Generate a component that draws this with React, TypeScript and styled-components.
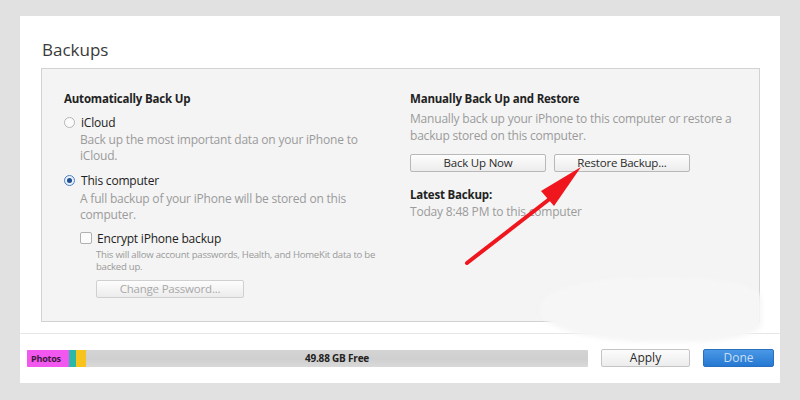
import React from "react";
import styled, { createGlobalStyle } from "styled-components";

const Global = createGlobalStyle`
  html, body { margin: 0; padding: 0; background: #e1e1e1; }
  body { font-family: "Open Sans", "Noto Sans", sans-serif; }
`;

const Page = styled.div`
  width: 800px;
  height: 400px;
  box-sizing: border-box;
  padding: 16px 20px 17px 20px;
`;

const Window = styled.div`
  position: relative;
  background: #ffffff;
  height: 367px;
  display: flex;
  flex-direction: column;
`;

const Title = styled.h1`
  margin: 0;
  padding: 22px 0 0 22px;
  height: 52px;
  box-sizing: border-box;
  font-size: 17px;
  font-weight: 400;
  color: #3a3a3a;
  line-height: 24px;
`;

const Panel = styled.div`
  margin: 0 20px 0 21px;
  height: 254px;
  box-sizing: border-box;
  background: #f4f4f4;
  border: 1px solid #d2d2d2;
  display: grid;
  grid-template-columns: 346px 1fr;
  padding: 22px 0 0 22px;
`;

const Column = styled.div`
  display: flex;
  flex-direction: column;
`;

const Heading = styled.div`
  font-size: 11.5px;
  font-weight: 700;
  color: #222;
  line-height: 16px;
  letter-spacing: -0.2px;
`;

const OptionRow = styled.div<{ $top: number }>`
  display: flex;
  align-items: center;
  margin-top: ${(p) => p.$top}px;
  height: 16px;
  font-size: 12px;
  color: #222;
  letter-spacing: -0.2px;
`;

const Radio = styled.span<{ $on?: boolean }>`
  width: 9px;
  height: 9px;
  border-radius: 50%;
  border: 1px solid ${(p) => (p.$on ? "#4a7fc1" : "#b5b5b5")};
  background: ${(p) => (p.$on ? "#e8f0fb" : "#fbfbfb")};
  margin-right: 6px;
  display: flex;
  align-items: center;
  justify-content: center;
  flex: none;
  &::after {
    content: "";
    display: ${(p) => (p.$on ? "block" : "none")};
    width: 5px;
    height: 5px;
    border-radius: 50%;
    background: #1f4f8f;
  }
`;

const Check = styled.span`
  width: 10px;
  height: 10px;
  border: 1px solid #b0b0b0;
  border-radius: 2px;
  background: #fbfbfb;
  margin-right: 5px;
  flex: none;
`;

const Desc = styled.div<{ $indent?: number; $top?: number }>`
  margin-left: ${(p) => p.$indent ?? 0}px;
  margin-top: ${(p) => p.$top ?? 0}px;
  font-size: 12px;
  line-height: 16px;
  color: #9b9b9b;
  letter-spacing: -0.2px;
  white-space: nowrap;
`;

const RightDesc = styled(Desc)`
  line-height: 17px;
`;

const SmallDesc = styled.div`
  margin: 3px 0 0 32px;
  font-size: 9.6px;
  line-height: 12px;
  color: #9a9a9a;
  letter-spacing: -0.25px;
  white-space: nowrap;
`;

const Indented = styled.div`
  margin-left: 16px;
`;

const Button = styled.button<{ $w: number; $disabled?: boolean }>`
  width: ${(p) => p.$w}px;
  height: 18px;
  padding: 0;
  box-sizing: border-box;
  border: 1px solid ${(p) => (p.$disabled ? "#d0d0d0" : "#b8b8b8")};
  border-radius: 2px;
  background: linear-gradient(#fdfdfd, #ececec);
  font-family: "Open Sans", sans-serif;
  font-size: 11.5px;
  line-height: 16px;
  color: ${(p) => (p.$disabled ? "#a8a8a8" : "#2a2a2a")};
  letter-spacing: -0.2px;
`;

const ButtonRow = styled.div<{ $top: number; $indent?: number }>`
  display: flex;
  gap: 8px;
  margin-top: ${(p) => p.$top}px;
  margin-left: ${(p) => p.$indent ?? 0}px;
`;

const Separator = styled.div`
  margin-top: 11px;
  height: 1px;
  background: #e6e6e6;
`;

const Footer = styled.div`
  display: flex;
  align-items: center;
  padding: 15px 6px 0 7px;
`;

const Storage = styled.div`
  width: 561px;
  height: 17px;
  display: flex;
  background: linear-gradient(#d4d4d4, #cfcfcf 50%, #d9d9d9);
  border-radius: 1px;
  overflow: hidden;
`;

const Segment = styled.div<{ $color: string; $w: number }>`
  width: ${(p) => p.$w}px;
  background: ${(p) => p.$color};
  font-size: 9px;
  font-weight: 700;
  color: #3a1a3a;
  line-height: 17px;
  padding-left: ${(p) => (p.$w > 20 ? 4 : 0)}px;
  box-sizing: border-box;
  flex: none;
  letter-spacing: -0.2px;
`;

const Free = styled.div`
  flex: 1;
  text-align: center;
  font-size: 10px;
  font-weight: 700;
  color: #222;
  line-height: 17px;
  letter-spacing: -0.2px;
`;

const Apply = styled.button`
  margin-left: 13px;
  width: 89px;
  height: 18px;
  padding: 0;
  border: 1px solid #c4c4c4;
  border-radius: 2px;
  background: linear-gradient(#fcfcfc, #ececec);
  font-family: "Open Sans", sans-serif;
  font-size: 12px;
  color: #2a2a2a;
  line-height: 16px;
`;

const Done = styled.button`
  margin-left: 13px;
  width: 71px;
  height: 18px;
  padding: 0;
  border: 1px solid #2a6fbf;
  border-radius: 2px;
  background: linear-gradient(#4a98e6, #2578d2);
  font-family: "Open Sans", sans-serif;
  font-size: 12px;
  color: #c8def5;
  line-height: 16px;
`;

const Blob = styled.div`
  position: absolute;
  left: 520px;
  top: 262px;
  width: 222px;
  height: 64px;
  border-radius: 45% 35% 30% 50%;
  background: #f6f6f6;
  filter: blur(2px);
  pointer-events: none;
`;

const ArrowSvg = styled.svg`
  position: absolute;
  left: 0;
  top: 0;
  pointer-events: none;
`;

export default function App() {
  return (
    <>
      <Global />
      <Page>
        <Window>
          <Title>Backups</Title>
          <Panel>
            <Column>
              <Heading>Automatically Back Up</Heading>
              <OptionRow $top={7}>
                <Radio />
                iCloud
              </OptionRow>
              <Desc $indent={16} $top={2}>
                Back up the most important data on your iPhone to
                <br />
                iCloud.
              </Desc>
              <OptionRow $top={8}>
                <Radio $on />
                This computer
              </OptionRow>
              <Desc $indent={16} $top={3}>
                A full backup of your iPhone will be stored on this
                <br />
                computer.
              </Desc>
              <Indented>
                <OptionRow $top={7}>
                  <Check />
                  Encrypt iPhone backup
                </OptionRow>
              </Indented>
              <SmallDesc>
                This will allow account passwords, Health, and HomeKit data to be
                <br />
                backed up.
              </SmallDesc>
              <ButtonRow $top={7} $indent={32}>
                <Button $w={148} $disabled>
                  Change Password...
                </Button>
              </ButtonRow>
            </Column>
            <Column>
              <Heading>Manually Back Up and Restore</Heading>
              <RightDesc $top={3}>
                Manually back up your iPhone to this computer or restore a
                <br />
                backup stored on this computer.
              </RightDesc>
              <ButtonRow $top={10}>
                <Button $w={136}>Back Up Now</Button>
                <Button $w={136}>Restore Backup...</Button>
              </ButtonRow>
              <Heading style={{ marginTop: 15 }}>Latest Backup:</Heading>
              <Desc $top={1}>Today 8:48 PM to this computer</Desc>
            </Column>
          </Panel>
          <Separator />
          <Footer>
            <Storage>
              <Segment $color="#f257f0" $w={42}>
                Photos
              </Segment>
              <Segment $color="#2bb8a8" $w={7} />
              <Segment $color="#f6c41c" $w={10} />
              <Free>49.88 GB Free</Free>
            </Storage>
            <Apply>Apply</Apply>
            <Done>Done</Done>
          </Footer>
          <Blob />
          <ArrowSvg width="760" height="367" viewBox="0 0 760 367">
            <line x1="447" y1="247" x2="536" y2="178" stroke="#f0161e" strokeWidth="4" strokeLinecap="round" />
            <polygon points="561,151 521,175 534,190" fill="#f0161e" />
          </ArrowSvg>
        </Window>
      </Page>
    </>
  );
}
